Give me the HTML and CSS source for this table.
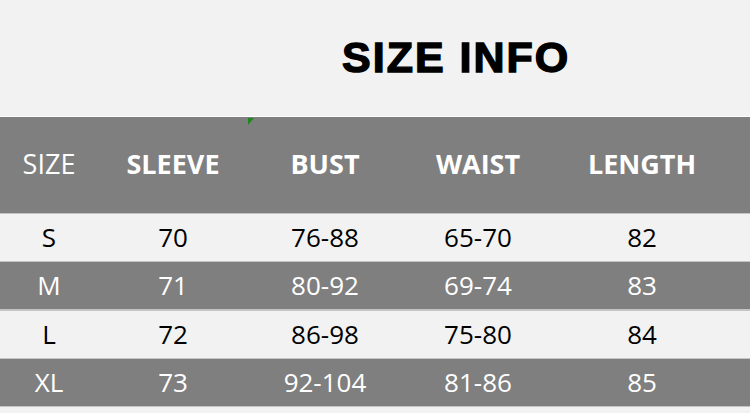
FILE: index.html
```html
<!DOCTYPE html>
<html>
<head>
<meta charset="utf-8">
<link rel="stylesheet" href="styles.css">
</head>
<body>
<div class="page">
  <h1 class="title">SIZE INFO</h1>
  <div class="chart">
    <span class="marker"></span>
    <div class="row head">
      <div class="cell light">SIZE</div>
      <div class="cell">SLEEVE</div>
      <div class="cell">BUST</div>
      <div class="cell">WAIST</div>
      <div class="cell">LENGTH</div>
    </div>
    <div class="row pale">
      <div class="cell">S</div><div class="cell">70</div><div class="cell">76-88</div><div class="cell">65-70</div><div class="cell">82</div>
    </div>
    <div class="row dark">
      <div class="cell">M</div><div class="cell">71</div><div class="cell">80-92</div><div class="cell">69-74</div><div class="cell">83</div>
    </div>
    <div class="row pale">
      <div class="cell">L</div><div class="cell">72</div><div class="cell">86-98</div><div class="cell">75-80</div><div class="cell">84</div>
    </div>
    <div class="row dark">
      <div class="cell">XL</div><div class="cell">73</div><div class="cell">92-104</div><div class="cell">81-86</div><div class="cell">85</div>
    </div>
  </div>
</div>
</body>
</html>
```

FILE: styles.css
```css
html, body {
  margin: 0;
  padding: 0;
  background: #f2f2f2;
}
.page {
  width: 750px;
  height: 413px;
  overflow: hidden;
}
.title {
  margin: 0;
  height: 116px;
  box-sizing: border-box;
  padding: 33px 0 0 342px;
  font-family: "Liberation Sans", Arial, sans-serif;
  font-weight: 700;
  font-size: 43px;
  line-height: 48px;
  letter-spacing: 2px;
  color: #000;
  -webkit-text-stroke: 1.4px #000;
}
.chart {
  position: relative;
  border-top: 1px solid #ffffff;
}
.marker {
  position: absolute;
  left: 248px;
  top: 1px;
  width: 0;
  height: 0;
  border-top: 7px solid #1e8a1e;
  border-right: 6px solid transparent;
}
.row {
  display: grid;
  grid-template-columns: 98px 150px 154px 152px 176px 20px;
  font-family: "Open Sans", "Noto Sans", sans-serif;
}
.cell {
  text-align: center;
}
.head {
  height: 96px;
  background: #7f7f7f;
  color: #fff;
  font-size: 27px;
  font-weight: 700;
  line-height: 94px;
}
.head .light {
  font-weight: 400;
}
.pale, .dark {
  height: 47px;
  border-top: 1px solid #c4c4c4;
  font-size: 26px;
  line-height: 47px;
}
.pale {
  background: #f2f2f2;
  color: #000;
}
.dark {
  background: #7f7f7f;
  color: #fff;
  border-bottom: 1px solid #c4c4c4;
}
```
